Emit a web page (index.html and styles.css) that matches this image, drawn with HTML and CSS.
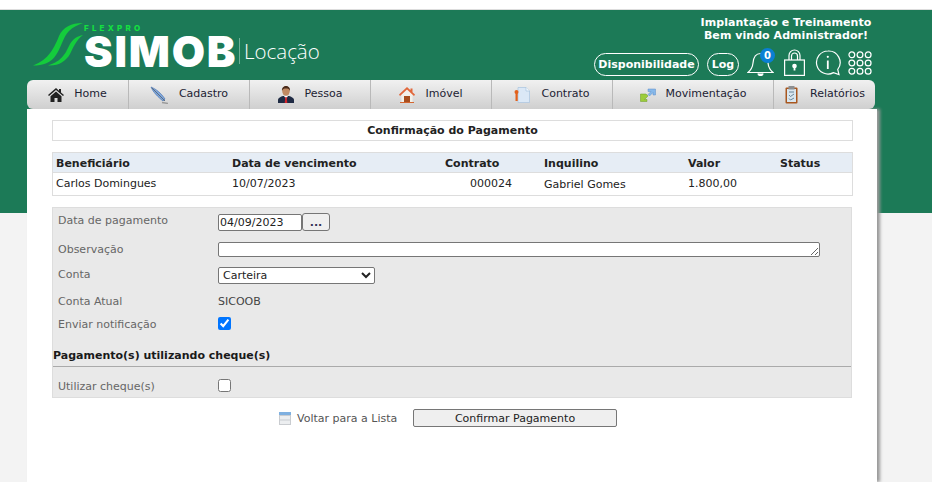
FILE: index.html
```html
<!DOCTYPE html>
<html lang="pt-BR">
<head>
<meta charset="utf-8">
<title>SIMOB Locação</title>
<link rel="stylesheet" href="styles.css">
</head>
<body>
<div class="shell">
  <header class="header">
    <div class="logo">
      <svg class="swoosh" viewBox="0 0 52 46" width="52" height="46">
        <path fill="#14cc3c" d="M50 1C38 1 30 5 26 14C22 24 16 38 0 43.500C10 43.500 18 41 23 33C28 26 30 15 36 9C40 5 45 3 50 1Z"/>
        <path fill="#14cc3c" d="M50 13C44 14 40 17 37 22C33 30 30 39 15 43.500C26 44 33 39 37 32C40 26 43 18 50 13Z"/>
      </svg>
      <div class="brand">
        <span class="flexpro">FLEXPRO</span>
        <span class="simob">SIMOB</span>
      </div>
      <span class="module">Locação</span>
    </div>
    <div class="account">
      <p class="welcome">Implantação e Treinamento<br>Bem vindo Administrador!</p>
      <div class="tools">
        <a class="pill pill-wide">Disponibilidade</a>
        <a class="pill pill-log">Log</a>
        <span class="tool tool-bell">
          <svg viewBox="0 0 27 27" width="27" height="27" fill="none" stroke="#fff" stroke-width="1.200"><path d="M1 23.500C4 21 5.500 19 6 14C6.500 8 9 4.500 13.500 4.500C18 4.500 20.500 8 21 14C21.500 19 23 21 26 23.500Z"/><path d="M11 24.500a2.500 2 0 0 0 5 0" fill="#fff"/></svg>
          <span class="badge">0</span>
        </span>
        <span class="tool tool-lock">
          <svg viewBox="0 0 21 27" width="21" height="27" fill="none" stroke="#fff" stroke-width="1.200"><path d="M5 11V6.500a5.500 5.500 0 0 1 11 0V11"/><path d="M7.500 11V7a3 3 0 0 1 6 0V11"/><rect x="0.600" y="11" width="19.800" height="15.400"/><circle cx="10.500" cy="17" r="1.700" fill="#fff"/><path d="M10.500 17v4.500" stroke-width="1.800"/></svg>
        </span>
        <span class="tool tool-info">
          <svg viewBox="0 0 26 26" width="26" height="26" fill="none" stroke="#fff" stroke-width="1.200"><path d="M13 1a11.500 11.500 0 1 0 5.500 21.600L24 24.500L22.700 19.500A11.500 11.500 0 0 0 13 1Z"/><path d="M12.800 10.500V19" stroke-width="1.800"/><circle cx="12.800" cy="6.800" r="1.100" fill="#fff" stroke="none"/></svg>
        </span>
        <span class="tool tool-grid">
          <svg viewBox="0 0 25 25" width="24" height="24" fill="none" stroke="#fff" stroke-width="1.300"><circle cx="4" cy="4" r="3"/><circle cx="12.500" cy="4" r="3"/><circle cx="21" cy="4" r="3"/><circle cx="4" cy="12.500" r="3"/><circle cx="12.500" cy="12.500" r="3"/><circle cx="21" cy="12.500" r="3"/><circle cx="4" cy="21" r="3"/><circle cx="12.500" cy="21" r="3"/><circle cx="21" cy="21" r="3"/></svg>
        </span>
      </div>
    </div>
  </header>

  <nav class="menu">
    <a class="item item-first">
      <svg viewBox="0 0 16 14" width="16" height="14"><path fill="#222" d="M8 0L0 7l1 1 7-6 7 6 1-1-3-2.600V1h-2v1.700Z"/><path fill="#222" d="M8 3.500L2.500 8.200V14h4v-4h3v4h4V8.200Z"/></svg>
      <span>Home</span>
    </a>
    <a class="item">
      <svg viewBox="0 0 18 18" width="18" height="18"><path fill="#7fa6dc" stroke="#3d68a8" stroke-width=".6" d="M1 1C6 3 11 7 15 13L13 15C8 11 3 6 1 1Z"/><path stroke="#5c6f80" d="M2 2L15 15"/><path stroke="#9a9a9a" stroke-width="1.400" d="M12 16.500L18 17.500"/></svg>
      <span>Cadastro</span>
    </a>
    <a class="item">
      <svg viewBox="0 0 16 17" width="16" height="17"><path fill="#1f2b44" d="M0 17v-3c0-2 3-3.500 5-4h6c2 .5 5 2 5 4v3Z"/><path fill="#fff" d="M6 10h4l-2 3Z"/><path fill="#d3252c" d="M7.300 11h1.400l.6 6H6.700Z"/><ellipse cx="8" cy="5" rx="3.800" ry="4.800" fill="#c08a63"/><path fill="#4a2c1b" d="M4 5C3.500 1.500 6 0 8 0s4.500 1.500 4 5C11.500 3 10 2.500 8 2.500S4.500 3 4 5Z"/></svg>
      <span>Pessoa</span>
    </a>
    <a class="item item-tight">
      <svg viewBox="0 0 16 16" width="16" height="16"><path fill="#f3f1ea" d="M2.500 7.500L8 2.500l5.500 5V15h-11Z"/><path fill="#e2673a" d="M8 0L0 7.500 1 9l7-6.500L15 9l1-1.500-2.500-2.300V1.500h-2v1.800Z"/><rect x="5" y="9" width="6" height="6" fill="#a84f1f"/><rect x="1" y="15" width="14" height="1" fill="#d4662f"/></svg>
      <span>Imóvel</span>
    </a>
    <a class="item">
      <svg viewBox="0 0 16 16" width="16" height="16"><path fill="#dbe8f6" stroke="#a9c4e0" stroke-width=".7" d="M4 .500h8l3.500 3.500v11.500H4Z"/><path fill="#f3f8fd" stroke="#a9c4e0" stroke-width=".7" d="M12 .500V4h3.500"/><circle cx="2.500" cy="5" r="2" fill="#e2611c"/><rect x="1.500" y="5" width="2.200" height="9" fill="#e2611c"/></svg>
      <span>Contrato</span>
    </a>
    <a class="item item-tight item-wide">
      <svg viewBox="0 0 16 14" width="16" height="14"><path fill="#86b8ea" stroke="#5c8fc8" stroke-width=".5" d="M8 1h7.500v6h-2.500V4.500L9.500 8 8 6.500 11 3.500H8Z"/><path fill="#9ccc3c" stroke="#6c9c24" stroke-width=".5" d="M.500 6H6l2 2L4.500 11.500H7v2H.500Z"/></svg>
      <span>Movimentação</span>
    </a>
    <a class="item item-last">
      <svg viewBox="0 0 13 18" width="13" height="18"><rect x=".500" y="1.500" width="12" height="16" fill="#a8571f" rx="1"/><rect x="2" y="3" width="9" height="13" fill="#d9e6ee"/><rect x="3.500" y="0" width="6" height="3.500" fill="#8d8f91"/><path stroke="#4b6d86" fill="none" stroke-width=".8" d="M4 6h5M4 9l1.500 1.500L9 8M4 12.500l1.500 1.500L9 12"/></svg>
      <span>Relatórios</span>
    </a>
  </nav>

  <main class="main">
    <h1 class="title">Confirmação do Pagamento</h1>

    <table class="bills">
      <thead>
        <tr>
          <th class="c-name">Beneficiário</th>
          <th class="c-due">Data de vencimento</th>
          <th class="c-contract">Contrato</th>
          <th class="c-tenant">Inquilino</th>
          <th class="c-value">Valor</th>
          <th class="c-status">Status</th>
        </tr>
      </thead>
      <tbody>
        <tr>
          <td>Carlos Domingues</td>
          <td>10/07/2023</td>
          <td class="num">000024</td>
          <td class="low">Gabriel Gomes</td>
          <td>1.800,00</td>
          <td></td>
        </tr>
      </tbody>
    </table>

    <form class="panel">
      <div class="row row-date">
        <label class="label">Data de pagamento</label>
        <div class="date-group">
          <input class="field date" type="text" value="04/09/2023">
          <button class="pick" type="button">...</button>
        </div>
      </div>
      <div class="row row-note">
        <label class="label">Observação</label>
        <textarea class="field note" rows="1"></textarea>
      </div>
      <div class="row row-account">
        <label class="label">Conta</label>
        <select class="field account-select"><option>Carteira</option></select>
      </div>
      <div class="row row-current">
        <label class="label">Conta Atual</label>
        <span class="static">SICOOB</span>
      </div>
      <div class="row row-notify">
        <label class="label">Enviar notificação</label>
        <input class="check" type="checkbox" checked>
      </div>
      <h2 class="section">Pagamento(s) utilizando cheque(s)</h2>
      <div class="row row-cheque">
        <label class="label">Utilizar cheque(s)</label>
        <input class="check" type="checkbox">
      </div>
    </form>

    <div class="actions">
      <a class="back">
        <svg viewBox="0 0 12 13" width="12" height="13"><rect width="12" height="13" fill="#c9ccd0"/><rect width="12" height="3" fill="#7fb0e0"/><rect x="1" y="4" width="10" height="3.500" fill="#eceef0"/><rect x="1" y="8.500" width="10" height="3.500" fill="#eceef0"/></svg>
        <span>Voltar para a Lista</span>
      </a>
      <button class="confirm" type="button">Confirmar Pagamento</button>
    </div>
  </main>
</div>
</body>
</html>
```

FILE: styles.css
```css
* {
  box-sizing: border-box;
}

html,
body {
  height: 100%;
}

body {
  margin: 0;
  overflow: hidden;
  font-family: "DejaVu Sans", Verdana, sans-serif;
  font-size: 11px;
  color: #222;
  background: linear-gradient(#fff 0 9px, #ddd 9px 10px, #1c7a57 10px 213px, #f3f3f3 213px);
}

.shell {
  width: 850px;
  height: 100%;
  margin-left: 27px;
  padding-top: 10px;
  display: flex;
  flex-direction: column;
}

.header {
  height: 70px;
  display: flex;
  justify-content: space-between;
  position: relative;
}

.logo {
  display: flex;
  align-items: flex-start;
  padding: 11px 0 0 6px;
  color: #fff;
}

.swoosh {
  flex: none;
  margin-top: 1px;
}

.brand {
  display: flex;
  flex-direction: column;
  width: 155px;
  margin-left: -1px;
}

.flexpro {
  font-family: Inter, sans-serif;
  font-weight: 800;
  font-size: 8px;
  line-height: 9px;
  letter-spacing: 3.200px;
  color: #14e040;
  margin-top: 3px;
}

.simob {
  font-family: Inter, sans-serif;
  font-weight: 900;
  font-size: 43px;
  line-height: 37px;
  letter-spacing: 1.800px;
}

.module {
  font-family: "Open Sans", sans-serif;
  font-weight: 300;
  font-size: 20.500px;
  line-height: 26px;
  margin-top: 17px;
  padding-left: 4px;
  border-left: 1px solid #6fae95;
}

.account {
  width: 283px;
  color: #fff;
}

.welcome {
  margin: 6px 0 0 99px;
  width: 186px;
  font-weight: 700;
  font-size: 11px;
  line-height: 13px;
  text-align: center;
  letter-spacing: .05px;
}

.tools {
  display: flex;
  align-items: flex-start;
  margin-top: 11px;
}

.pill {
  flex: none;
  height: 23px;
  border: 1px solid #fff;
  border-radius: 12px;
  font-weight: 700;
  line-height: 21px;
  text-align: center;
}

.pill-wide {
  width: 105px;
}

.pill-log {
  width: 32px;
  margin-left: 8px;
}

.tool {
  flex: none;
  display: block;
  position: relative;
  height: 27px;
}

.tool-bell {
  margin-left: 8px;
  margin-top: -4px;
}

.tool-lock {
  margin-left: 10px;
  margin-top: -4px;
}

.tool-info {
  margin-left: 10px;
  margin-top: -3px;
}

.tool-grid {
  margin-left: 7px;
  margin-top: -2px;
}

.badge {
  position: absolute;
  top: -1px;
  left: 13px;
  width: 15px;
  height: 15px;
  border-radius: 50%;
  background: #0a7fd4;
  font-weight: 700;
  font-size: 10px;
  line-height: 15px;
  text-align: center;
}

.menu {
  flex: none;
  width: 848px;
  height: 29px;
  display: flex;
  background: linear-gradient(#f1f1f1, #cfcfcf);
  border-radius: 6px;
  position: relative;
}

.item {
  flex: none;
  width: 121px;
  display: flex;
  align-items: center;
  justify-content: center;
  gap: 11px;
  border-right: 1px solid #b9b9b9;
  color: #1c2233;
}

.item span {
  padding-bottom: 2px;
}

.item-first {
  width: 102px;
  gap: 10px;
}

.item-tight {
  gap: 10px;
}

.item-wide {
  width: 161px;
}

.item-last {
  width: 102px;
  gap: 12px;
  border-right: 0;
}

.main {
  flex: 1;
  padding: 11px 25px 0;
  background: #fff;
  box-shadow: 3px 0 3px #999;
}

.title {
  margin: 0;
  height: 21px;
  border: 1px solid #ddd;
  font-size: 11px;
  font-weight: 700;
  line-height: 19px;
  text-align: center;
  width: 801px;
}

.bills {
  width: 801px;
  margin-top: 11px;
  border: 1px solid #ddd;
  border-collapse: separate;
  border-spacing: 0;
  table-layout: fixed;
}

.bills th,
.bills td {
  text-align: left;
  font-size: 11px;
}

.bills th {
  height: 20px;
  padding: 1px 0 0 3px;
  background: #e6edf5;
  border-bottom: 1px solid #ddd;
}

.bills td {
  height: 22px;
  padding: 0 0 2px 3px;
}

.c-name {
  width: 176px;
}

.c-due {
  width: 213px;
}

.c-contract {
  width: 99px;
}

.c-tenant {
  width: 144px;
}

.c-value {
  width: 92px;
}

.bills .num {
  text-align: right;
  padding-right: 29px;
}

.bills .low {
  padding-bottom: 0;
}

.panel {
  width: 800px;
  height: 191px;
  margin-top: 11px;
  border: 1px solid #ddd;
  background: #e9e9e9;
  padding-top: 5px;
}

.row {
  display: flex;
  align-items: flex-start;
  padding-left: 5px;
}

.label {
  flex: none;
  width: 160px;
  padding-top: 1px;
  color: #666;
  line-height: 13px;
}

.row-date {
  height: 29px;
}

.row-note {
  height: 25px;
}

.row-account {
  height: 27px;
}

.row-current {
  height: 23px;
}

.row-notify {
  height: 32px;
}

.row-cheque {
  height: 20px;
  margin-top: 13px;
}

.row-cheque .label {
  padding-top: 0;
}

.row-cheque .check {
  margin-top: -1px;
}

.date-group {
  display: flex;
  align-items: flex-start;
}

.field {
  margin: 0;
  font-family: inherit;
  font-size: 11px;
  color: #222;
  background: #fff;
  border: 1px solid #767676;
  border-radius: 2px;
}

.date {
  width: 84px;
  height: 17px;
  margin-top: 1px;
  padding: 0 1px;
}

.pick {
  width: 28px;
  height: 18px;
  margin: 0;
  padding: 0;
  font-family: inherit;
  font-size: 11px;
  font-weight: 700;
  color: #335;
  background: #efefef;
  border: 1px solid #767676;
  border-radius: 3px;
}

.note {
  display: block;
  width: 602px;
  height: 15px;
  padding: 0 2px;
  resize: both;
}

.account-select {
  width: 157px;
  height: 17px;
  padding: 0;
}

.static {
  padding-top: 1px;
  color: #444;
  line-height: 13px;
}

.check {
  width: 13px;
  height: 13px;
  margin: 0;
}

.section {
  margin: 0;
  height: 18px;
  border-bottom: 1px solid #aaa;
  font-size: 11px;
  font-weight: 700;
  line-height: 13px;
  color: #1a1a1a;
}

.actions {
  display: flex;
  align-items: center;
  margin: 11px 0 0 227px;
}

.back {
  display: flex;
  align-items: center;
  gap: 6px;
  width: 134px;
  color: #555;
}

.confirm {
  width: 204px;
  height: 18px;
  padding: 0;
  font-family: inherit;
  font-size: 11px;
  color: #222;
  background: #efefef;
  border: 1px solid #767676;
  border-radius: 2px;
}
```
